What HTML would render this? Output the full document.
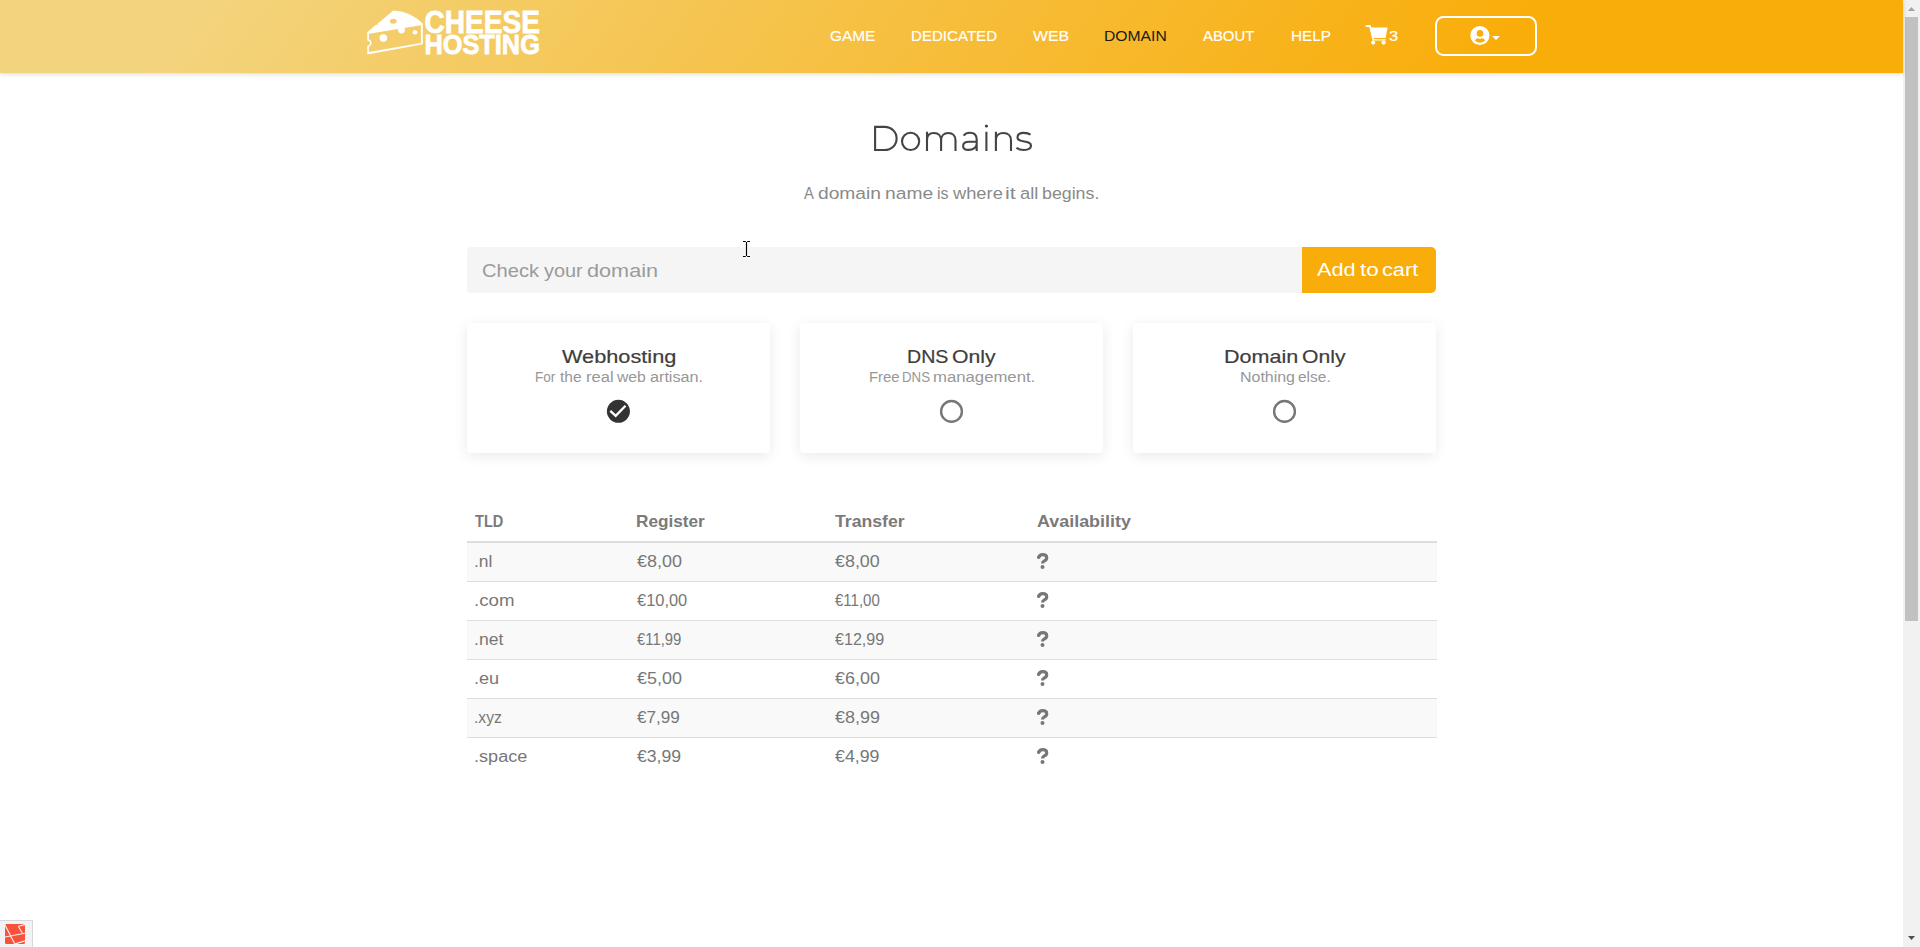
<!DOCTYPE html>
<html><head><meta charset="utf-8">
<style>
html,body{margin:0;padding:0;width:1920px;height:947px;overflow:hidden;background:#fff;font-family:"Liberation Sans",sans-serif;}
.a{position:absolute;}
.t{position:absolute;z-index:2;white-space:nowrap;font-family:"Liberation Sans",sans-serif;}
#hdr{position:absolute;left:0;top:0;width:1903px;height:73px;background:linear-gradient(126deg,#f3d47e 158px,#f9ad09 1250px);box-shadow:0 1px 5px rgba(0,0,0,.16);z-index:1;}
.card{position:absolute;top:323px;width:303px;height:130px;background:#fff;border-radius:4px;box-shadow:0 3px 14px rgba(0,0,0,.085);}
.line1{position:absolute;left:467px;width:970px;height:1px;background:#ddd;}
.stripe{position:absolute;left:467px;width:970px;height:38px;background:#f9f9f9;}
</style></head><body>
<div id="hdr">
<svg class="a" style="left:0;top:0" width="1903" height="73" viewBox="0 0 1903 73">
 <!-- cheese wedge -->
 <path fill="#fff" fill-rule="evenodd" d="M367.3,32.2 L376.2,24.6 L377.4,25.2 L377.6,23.8 L393.3,10.4 Q410,11 422.8,23.4 L422.8,44.3 L367.3,54.4 L367.3,45.7 A2.6,2.6 0 0 0 367.3,40.5 Z M368.9,33.8 L420.9,25.3 L420.9,43 L368.9,51.9 L368.9,46.9 A4.1,4.1 0 0 0 368.9,39.2 Z M389.9,21.2 A3.4,2.5 0 1 0 396.7,21.2 A3.4,2.5 0 1 0 389.9,21.2 Z"/>
 <circle cx="401.5" cy="30" r="3.4" fill="#fff"/>
 <circle cx="383.4" cy="38" r="3.8" fill="#fff"/>
 <circle cx="415" cy="32.2" r="2.3" fill="#fff"/>
 <text x="424.4" y="32.6" fill="#fff" stroke="#fff" stroke-width="0.8" font-family="Liberation Sans" font-weight="700" font-size="31.2" textLength="115.5" lengthAdjust="spacingAndGlyphs">CHEESE</text>
 <text x="424.4" y="54.3" fill="#fff" stroke="#fff" stroke-width="0.8" font-family="Liberation Sans" font-weight="700" font-size="27.2" textLength="115.5" lengthAdjust="spacingAndGlyphs">HOSTING</text>
 <!-- cart -->
 <g fill="#fff">
  <path d="M1365.5,26.2 Q1365.5,25 1366.8,25 L1369.6,25 Q1370.8,25 1371,26.3 L1371.3,27.6 L1387.6,27.6 L1385.6,38 L1373.6,38 L1373.9,39.2 L1385.8,39.2 L1385.8,40.6 L1372.6,40.6 L1369.3,27 L1366.8,27 Q1365.5,27 1365.5,26.2 Z"/>
  <circle cx="1373.2" cy="42.6" r="2.1"/>
  <circle cx="1383.6" cy="42.6" r="2.1"/>
 </g>
 <!-- user button -->
 <rect x="1436" y="17" width="100" height="38" rx="7.5" ry="7.5" fill="none" stroke="#fff" stroke-width="2"/>
 <circle cx="1479.9" cy="35.5" r="9.6" fill="#fff"/>
 <circle cx="1480" cy="33.4" r="3.3" fill="#f9ae0c"/>
 <path fill="#f9ae0c" d="M1474.9,40.4 Q1476.8,37.6 1478.6,38.4 Q1480,39 1481.4,38.4 Q1483.2,37.6 1485.2,40.4 Q1480,45 1474.9,40.4 Z"/>
 <path fill="#fff" d="M1492,36 L1500,36 L1496,40 Z"/>
</svg>
</div>

<!-- input group -->
<div class="a" style="left:467px;top:247px;width:835px;height:46px;background:#f5f5f5;border-radius:4px 0 0 4px;"></div>
<div class="a" style="left:1302px;top:247px;width:134px;height:46px;background:#f9ad0a;border-radius:0 5px 5px 0;"></div>

<!-- cards -->
<div class="card" style="left:467px"></div>
<div class="card" style="left:800px"></div>
<div class="card" style="left:1133px"></div>
<svg class="a" style="left:0;top:0" width="1903" height="947">
 <circle cx="618.4" cy="411.3" r="11.5" fill="#333"/>
 <path d="M610.3,410.8 L615.7,415.9 L625.5,405.8" fill="none" stroke="#fff" stroke-width="2.3"/>
 <circle cx="951.5" cy="411.4" r="10.4" fill="none" stroke="#777" stroke-width="2.4"/>
 <circle cx="1284.5" cy="411.4" r="10.4" fill="none" stroke="#777" stroke-width="2.4"/>
</svg>

<!-- table -->
<div class="a" style="left:467px;top:541px;width:970px;height:2px;background:#ddd"></div>
<div class="stripe" style="top:543px"></div>
<div class="stripe" style="top:621px"></div>
<div class="stripe" style="top:699px"></div>
<div class="line1" style="top:581px"></div>
<div class="line1" style="top:620px"></div>
<div class="line1" style="top:659px"></div>
<div class="line1" style="top:698px"></div>
<div class="line1" style="top:737px"></div>
<svg class="a" style="left:0;top:0" width="1903" height="947">
 <g id="qs"><g transform="translate(0,0)"><path d="M1038.5,557.6 Q1039.6,554.7 1042.6,554.7 Q1046.7,554.7 1046.7,557.7 Q1046.7,559.7 1044.4,560.9 Q1042.5,561.9 1042.5,563.4" fill="none" stroke="#777" stroke-width="3.2" stroke-linecap="butt"/><circle cx="1038.6" cy="557.4" r="1.6" fill="#777"/><circle cx="1042.5" cy="567" r="2.0" fill="#777"/></g><g transform="translate(0,39)"><path d="M1038.5,557.6 Q1039.6,554.7 1042.6,554.7 Q1046.7,554.7 1046.7,557.7 Q1046.7,559.7 1044.4,560.9 Q1042.5,561.9 1042.5,563.4" fill="none" stroke="#777" stroke-width="3.2" stroke-linecap="butt"/><circle cx="1038.6" cy="557.4" r="1.6" fill="#777"/><circle cx="1042.5" cy="567" r="2.0" fill="#777"/></g><g transform="translate(0,78)"><path d="M1038.5,557.6 Q1039.6,554.7 1042.6,554.7 Q1046.7,554.7 1046.7,557.7 Q1046.7,559.7 1044.4,560.9 Q1042.5,561.9 1042.5,563.4" fill="none" stroke="#777" stroke-width="3.2" stroke-linecap="butt"/><circle cx="1038.6" cy="557.4" r="1.6" fill="#777"/><circle cx="1042.5" cy="567" r="2.0" fill="#777"/></g><g transform="translate(0,117)"><path d="M1038.5,557.6 Q1039.6,554.7 1042.6,554.7 Q1046.7,554.7 1046.7,557.7 Q1046.7,559.7 1044.4,560.9 Q1042.5,561.9 1042.5,563.4" fill="none" stroke="#777" stroke-width="3.2" stroke-linecap="butt"/><circle cx="1038.6" cy="557.4" r="1.6" fill="#777"/><circle cx="1042.5" cy="567" r="2.0" fill="#777"/></g><g transform="translate(0,156)"><path d="M1038.5,557.6 Q1039.6,554.7 1042.6,554.7 Q1046.7,554.7 1046.7,557.7 Q1046.7,559.7 1044.4,560.9 Q1042.5,561.9 1042.5,563.4" fill="none" stroke="#777" stroke-width="3.2" stroke-linecap="butt"/><circle cx="1038.6" cy="557.4" r="1.6" fill="#777"/><circle cx="1042.5" cy="567" r="2.0" fill="#777"/></g><g transform="translate(0,195)"><path d="M1038.5,557.6 Q1039.6,554.7 1042.6,554.7 Q1046.7,554.7 1046.7,557.7 Q1046.7,559.7 1044.4,560.9 Q1042.5,561.9 1042.5,563.4" fill="none" stroke="#777" stroke-width="3.2" stroke-linecap="butt"/><circle cx="1038.6" cy="557.4" r="1.6" fill="#777"/><circle cx="1042.5" cy="567" r="2.0" fill="#777"/></g></g>
</svg>

<svg class="a" style="left:0;top:0" width="1903" height="947">
 <g fill="none" stroke="#444" stroke-width="2.1" id="title">
  <path d="M875.1,126.9 V150 H884.5 C891.5,150 896.6,145 896.6,138.45 C896.6,131.9 891.5,126.9 884.5,126.9 Z"/>
  <ellipse cx="910.6" cy="141.35" rx="8.6" ry="8.65"/>
  <path d="M927,151 V131.7 M927,140 C927,135.5 929.8,133 934,133 C938.3,133 941.1,135.8 941.1,140.5 V151 M941.1,140.5 C941.1,135.8 944,133 948.3,133 C952.6,133 955.5,135.8 955.5,140.5 V151"/>
  <path d="M963.6,135.6 C965,133.6 967.2,132.7 970,132.7 C974.2,132.7 976.7,135.2 976.7,139.5 V151 M976.7,141.8 H969.2 C965.3,141.8 963.1,143.4 963.1,145.9 C963.1,148.4 965.3,149.9 968.6,149.9 C973.3,149.9 976.7,147.3 976.7,143.8"/>
  <path d="M986.4,131.7 V151 M995.9,131.7 V151 M995.9,140 C995.9,135.5 999,133 1003.5,133 C1008,133 1011,135.8 1011,140.5 V151"/>
  <path d="M1030.5,134.6 C1028.8,133.4 1026.5,132.9 1023.9,132.9 C1019.6,132.9 1017.5,134.9 1017.5,137.4 C1017.5,143.5 1031,139.5 1031,145.6 C1031,148.3 1028.6,150 1024,150 C1020.8,150 1018.1,149.1 1016.5,147.7"/>
 </g>
 <circle cx="986.4" cy="126" r="1.6" fill="#444"/>
</svg>
<span class="t" id="nav1" style="left:830.24px;top:28.73px;font-size:14.5px;line-height:14.5px;font-weight:400;color:#fff;letter-spacing:0.000px;-webkit-text-stroke:0.15px #fff;transform:scaleX(1.061);transform-origin:0 0;">GAME</span>
<span class="t" id="nav2" style="left:910.86px;top:28.73px;font-size:14.5px;line-height:14.5px;font-weight:400;color:#fff;letter-spacing:0.000px;-webkit-text-stroke:0.15px #fff;transform:scaleX(1.0407);transform-origin:0 0;">DEDICATED</span>
<span class="t" id="nav3" style="left:1033.10px;top:28.73px;font-size:14.5px;line-height:14.5px;font-weight:400;color:#fff;letter-spacing:0.000px;-webkit-text-stroke:0.15px #fff;transform:scaleX(1.0938);transform-origin:0 0;">WEB</span>
<span class="t" id="nav4" style="left:1103.92px;top:28.73px;font-size:14.5px;line-height:14.5px;font-weight:400;color:#1a1a1a;letter-spacing:0.000px;transform:scaleX(1.0821);transform-origin:0 0;">DOMAIN</span>
<span class="t" id="nav5" style="left:1203.10px;top:28.73px;font-size:14.5px;line-height:14.5px;font-weight:400;color:#fff;letter-spacing:0.000px;-webkit-text-stroke:0.15px #fff;transform:scaleX(1.026);transform-origin:0 0;">ABOUT</span>
<span class="t" id="nav6" style="left:1290.65px;top:28.73px;font-size:14.5px;line-height:14.5px;font-weight:400;color:#fff;letter-spacing:0.000px;-webkit-text-stroke:0.15px #fff;transform:scaleX(1.0528);transform-origin:0 0;">HELP</span>
<span class="t" id="cartn" style="left:1388.96px;top:28.73px;font-size:14.5px;line-height:14.5px;font-weight:400;color:#fff;letter-spacing:0.000px;-webkit-text-stroke:0.15px #fff;transform:scaleX(1.1429);transform-origin:0 0;">3</span>
<span class="t" id="sub_0" style="left:804.30px;top:185.86px;font-size:16.7px;line-height:16.7px;font-weight:400;color:#8a8a8a;letter-spacing:0.000px;transform:scaleX(0.8909);transform-origin:0 0;">A</span>
<span class="t" id="sub_1" style="left:817.95px;top:185.86px;font-size:16.7px;line-height:16.7px;font-weight:400;color:#8a8a8a;letter-spacing:0.000px;transform:scaleX(1.1509);transform-origin:0 0;">domain</span>
<span class="t" id="sub_2" style="left:884.75px;top:185.86px;font-size:16.7px;line-height:16.7px;font-weight:400;color:#8a8a8a;letter-spacing:0.000px;transform:scaleX(1.1525);transform-origin:0 0;">name</span>
<span class="t" id="sub_3" style="left:936.55px;top:185.86px;font-size:16.7px;line-height:16.7px;font-weight:400;color:#8a8a8a;letter-spacing:0.000px;transform:scaleX(0.9545);transform-origin:0 0;">is</span>
<span class="t" id="sub_4" style="left:952.70px;top:185.86px;font-size:16.7px;line-height:16.7px;font-weight:400;color:#8a8a8a;letter-spacing:0.000px;transform:scaleX(1.0956);transform-origin:0 0;">where</span>
<span class="t" id="sub_5" style="left:1005.31px;top:185.86px;font-size:16.7px;line-height:16.7px;font-weight:400;color:#8a8a8a;letter-spacing:0.000px;transform:scaleX(1.2857);transform-origin:0 0;">it</span>
<span class="t" id="sub_6" style="left:1019.61px;top:185.86px;font-size:16.7px;line-height:16.7px;font-weight:400;color:#8a8a8a;letter-spacing:0.000px;transform:scaleX(1.0933);transform-origin:0 0;">all</span>
<span class="t" id="sub_7" style="left:1041.93px;top:185.86px;font-size:16.7px;line-height:16.7px;font-weight:400;color:#8a8a8a;letter-spacing:0.000px;transform:scaleX(1.0654);transform-origin:0 0;">begins.</span>
<span class="t" id="ph_0" style="left:482.03px;top:262.10px;font-size:18.9px;line-height:18.9px;font-weight:400;color:#9b9b9b;letter-spacing:0.000px;transform:scaleX(1.0654);transform-origin:0 0;">Check</span>
<span class="t" id="ph_1" style="left:544.30px;top:262.10px;font-size:18.9px;line-height:18.9px;font-weight:400;color:#9b9b9b;letter-spacing:0.000px;transform:scaleX(1.0541);transform-origin:0 0;">your</span>
<span class="t" id="ph_2" style="left:587.35px;top:262.10px;font-size:18.9px;line-height:18.9px;font-weight:400;color:#9b9b9b;letter-spacing:0.000px;transform:scaleX(1.1467);transform-origin:0 0;">domain</span>
<span class="t" id="btn_0" style="left:1317.40px;top:260.50px;font-size:18.9px;line-height:18.9px;font-weight:400;color:#fff;letter-spacing:0.000px;transform:scaleX(1.15);transform-origin:0 0;">Add</span>
<span class="t" id="btn_1" style="left:1360.20px;top:260.50px;font-size:18.9px;line-height:18.9px;font-weight:400;color:#fff;letter-spacing:0.000px;transform:scaleX(1.1867);transform-origin:0 0;">to</span>
<span class="t" id="btn_2" style="left:1382.45px;top:260.50px;font-size:18.9px;line-height:18.9px;font-weight:400;color:#fff;letter-spacing:0.000px;transform:scaleX(1.1484);transform-origin:0 0;">cart</span>
<span class="t" id="c1t" style="left:561.80px;top:347.64px;font-size:18.5px;line-height:18.5px;font-weight:400;color:#3d3d3d;letter-spacing:0.000px;-webkit-text-stroke:0.2px #3d3d3d;transform:scaleX(1.174);transform-origin:0 0;">Webhosting</span>
<span class="t" id="c1s_0" style="left:534.52px;top:371.12px;font-size:13.8px;line-height:13.8px;font-weight:400;color:#979797;letter-spacing:0.000px;transform:scaleX(0.985);transform-origin:0 0;">For</span>
<span class="t" id="c1s_1" style="left:560.40px;top:371.12px;font-size:13.8px;line-height:13.8px;font-weight:400;color:#979797;letter-spacing:0.000px;transform:scaleX(1.1263);transform-origin:0 0;">the</span>
<span class="t" id="c1s_2" style="left:585.80px;top:371.12px;font-size:13.8px;line-height:13.8px;font-weight:400;color:#979797;letter-spacing:0.000px;transform:scaleX(1.2);transform-origin:0 0;">real</span>
<span class="t" id="c1s_3" style="left:617.00px;top:371.12px;font-size:13.8px;line-height:13.8px;font-weight:400;color:#979797;letter-spacing:0.000px;transform:scaleX(1.14);transform-origin:0 0;">web</span>
<span class="t" id="c1s_4" style="left:649.53px;top:371.12px;font-size:13.8px;line-height:13.8px;font-weight:400;color:#979797;letter-spacing:0.000px;transform:scaleX(1.1721);transform-origin:0 0;">artisan.</span>
<span class="t" id="c2t_0" style="left:907.24px;top:347.64px;font-size:18.5px;line-height:18.5px;font-weight:400;color:#3d3d3d;letter-spacing:0.000px;-webkit-text-stroke:0.2px #3d3d3d;transform:scaleX(1.0595);transform-origin:0 0;">DNS</span>
<span class="t" id="c2t_1" style="left:952.25px;top:347.64px;font-size:18.5px;line-height:18.5px;font-weight:400;color:#3d3d3d;letter-spacing:0.000px;-webkit-text-stroke:0.2px #3d3d3d;transform:scaleX(1.1459);transform-origin:0 0;">Only</span>
<span class="t" id="c2s_0" style="left:868.52px;top:371.12px;font-size:13.8px;line-height:13.8px;font-weight:400;color:#979797;letter-spacing:0.000px;transform:scaleX(1.0778);transform-origin:0 0;">Free</span>
<span class="t" id="c2s_1" style="left:902.34px;top:371.12px;font-size:13.8px;line-height:13.8px;font-weight:400;color:#979797;letter-spacing:0.000px;transform:scaleX(0.9607);transform-origin:0 0;">DNS</span>
<span class="t" id="c2s_2" style="left:933.49px;top:371.12px;font-size:13.8px;line-height:13.8px;font-weight:400;color:#979797;letter-spacing:0.000px;transform:scaleX(1.2122);transform-origin:0 0;">management.</span>
<span class="t" id="c3t_0" style="left:1223.64px;top:347.64px;font-size:18.5px;line-height:18.5px;font-weight:400;color:#3d3d3d;letter-spacing:0.000px;-webkit-text-stroke:0.2px #3d3d3d;transform:scaleX(1.1645);transform-origin:0 0;">Domain</span>
<span class="t" id="c3t_1" style="left:1302.16px;top:347.64px;font-size:18.5px;line-height:18.5px;font-weight:400;color:#3d3d3d;letter-spacing:0.000px;-webkit-text-stroke:0.2px #3d3d3d;transform:scaleX(1.1432);transform-origin:0 0;">Only</span>
<span class="t" id="c3s_0" style="left:1239.74px;top:371.12px;font-size:13.8px;line-height:13.8px;font-weight:400;color:#979797;letter-spacing:0.000px;transform:scaleX(1.1565);transform-origin:0 0;">Nothing</span>
<span class="t" id="c3s_1" style="left:1297.78px;top:371.12px;font-size:13.8px;line-height:13.8px;font-weight:400;color:#979797;letter-spacing:0.000px;transform:scaleX(1.1222);transform-origin:0 0;">else.</span>
<span class="t" id="th1" style="left:474.80px;top:513.17px;font-size:16.1px;line-height:16.1px;font-weight:700;color:#7a7a7a;letter-spacing:0.000px;transform:scaleX(0.9032);transform-origin:0 0;">TLD</span>
<span class="t" id="th2" style="left:635.93px;top:513.17px;font-size:16.1px;line-height:16.1px;font-weight:700;color:#7a7a7a;letter-spacing:0.000px;transform:scaleX(1.0683);transform-origin:0 0;">Register</span>
<span class="t" id="th3" style="left:834.80px;top:513.17px;font-size:16.1px;line-height:16.1px;font-weight:700;color:#7a7a7a;letter-spacing:0.000px;transform:scaleX(1.0968);transform-origin:0 0;">Transfer</span>
<span class="t" id="th4" style="left:1036.80px;top:513.17px;font-size:16.1px;line-height:16.1px;font-weight:700;color:#7a7a7a;letter-spacing:0.000px;transform:scaleX(1.1131);transform-origin:0 0;">Availability</span>
<span class="t" id="r0a" style="left:473.71px;top:554.16px;font-size:16px;line-height:16px;font-weight:400;color:#777;letter-spacing:0.000px;transform:scaleX(1.0867);transform-origin:0 0;">.nl</span>
<span class="t" id="r0b" style="left:636.90px;top:554.16px;font-size:16px;line-height:16px;font-weight:400;color:#777;letter-spacing:0.000px;transform:scaleX(1.1225);transform-origin:0 0;">€8,00</span>
<span class="t" id="r0c" style="left:834.80px;top:554.16px;font-size:16px;line-height:16px;font-weight:400;color:#777;letter-spacing:0.000px;transform:scaleX(1.1175);transform-origin:0 0;">€8,00</span>
<span class="t" id="r1a" style="left:473.63px;top:593.16px;font-size:16px;line-height:16px;font-weight:400;color:#777;letter-spacing:0.000px;transform:scaleX(1.1667);transform-origin:0 0;">.com</span>
<span class="t" id="r1b" style="left:636.90px;top:593.16px;font-size:16px;line-height:16px;font-weight:400;color:#777;letter-spacing:0.000px;transform:scaleX(1.0271);transform-origin:0 0;">€10,00</span>
<span class="t" id="r1c" style="left:834.80px;top:593.16px;font-size:16px;line-height:16px;font-weight:400;color:#777;letter-spacing:0.000px;transform:scaleX(0.9383);transform-origin:0 0;">€11,00</span>
<span class="t" id="r2a" style="left:473.70px;top:632.16px;font-size:16px;line-height:16px;font-weight:400;color:#777;letter-spacing:0.000px;transform:scaleX(1.1);transform-origin:0 0;">.net</span>
<span class="t" id="r2b" style="left:636.90px;top:632.16px;font-size:16px;line-height:16px;font-weight:400;color:#777;letter-spacing:0.000px;transform:scaleX(0.9277);transform-origin:0 0;">€11,99</span>
<span class="t" id="r2c" style="left:834.80px;top:632.16px;font-size:16px;line-height:16px;font-weight:400;color:#777;letter-spacing:0.000px;transform:scaleX(1.0063);transform-origin:0 0;">€12,99</span>
<span class="t" id="r3a" style="left:473.67px;top:671.16px;font-size:16px;line-height:16px;font-weight:400;color:#777;letter-spacing:0.000px;transform:scaleX(1.13);transform-origin:0 0;">.eu</span>
<span class="t" id="r3b" style="left:636.90px;top:671.16px;font-size:16px;line-height:16px;font-weight:400;color:#777;letter-spacing:0.000px;transform:scaleX(1.1225);transform-origin:0 0;">€5,00</span>
<span class="t" id="r3c" style="left:834.80px;top:671.16px;font-size:16px;line-height:16px;font-weight:400;color:#777;letter-spacing:0.000px;transform:scaleX(1.1225);transform-origin:0 0;">€6,00</span>
<span class="t" id="r4a" style="left:473.82px;top:710.16px;font-size:16px;line-height:16px;font-weight:400;color:#777;letter-spacing:0.000px;transform:scaleX(0.9815);transform-origin:0 0;">.xyz</span>
<span class="t" id="r4b" style="left:636.90px;top:710.16px;font-size:16px;line-height:16px;font-weight:400;color:#777;letter-spacing:0.000px;transform:scaleX(1.07);transform-origin:0 0;">€7,99</span>
<span class="t" id="r4c" style="left:834.80px;top:710.16px;font-size:16px;line-height:16px;font-weight:400;color:#777;letter-spacing:0.000px;transform:scaleX(1.1225);transform-origin:0 0;">€8,99</span>
<span class="t" id="r5a" style="left:473.67px;top:749.16px;font-size:16px;line-height:16px;font-weight:400;color:#777;letter-spacing:0.000px;transform:scaleX(1.1304);transform-origin:0 0;">.space</span>
<span class="t" id="r5b" style="left:636.90px;top:749.16px;font-size:16px;line-height:16px;font-weight:400;color:#777;letter-spacing:0.000px;transform:scaleX(1.1025);transform-origin:0 0;">€3,99</span>
<span class="t" id="r5c" style="left:834.80px;top:749.16px;font-size:16px;line-height:16px;font-weight:400;color:#777;letter-spacing:0.000px;transform:scaleX(1.11);transform-origin:0 0;">€4,99</span>

<!-- cursor -->
<svg class="a" style="left:740px;top:238px" width="14" height="22" viewBox="740 238 14 22">
 <path d="M743,241.5 H745.8 M747.2,241.5 H750 M746.5,242 V256 M743,256.5 H745.8 M747.2,256.5 H750" stroke="#fff" stroke-width="3" fill="none"/>
 <path d="M743,241.5 H745.8 M747.2,241.5 H750 M746.5,242 V256 M743,256.5 H745.8 M747.2,256.5 H750" stroke="#000" stroke-width="1.2" fill="none"/>
</svg>

<!-- bottom-left widget -->
<div class="a" style="left:-1px;top:920px;width:34px;height:28px;background:#f3f3f3;border:1px solid #d8d8d8;box-sizing:border-box;"></div>
<svg class="a" style="left:5px;top:924px" width="20" height="20" viewBox="0 0 20 20">
 <rect x="0" y="0" width="20" height="20" rx="1.5" fill="#f8523a"/>
 <path d="M0,1 L9.8,20 M0,13 L20,9.3 M13.3,2.2 L17.3,9 M13.3,2.2 L20,0.6 M10.3,19.9 L20,16.9" stroke="#f3f3f3" stroke-width="1.1" fill="none"/>
</svg>

<!-- scrollbar -->
<div class="a" style="left:1903px;top:0;width:17px;height:947px;background:#f1f1f1"></div>
<div class="a" style="left:1905px;top:17px;width:13px;height:604px;background:#c1c1c1"></div>
<svg class="a" style="left:1903px;top:0" width="17" height="947">
 <path d="M5,11 L12,11 L8.5,7 Z" fill="#a3a3a3"/>
 <path d="M5,936 L12,936 L8.5,940 Z" fill="#505050"/>
</svg>
</body></html>
